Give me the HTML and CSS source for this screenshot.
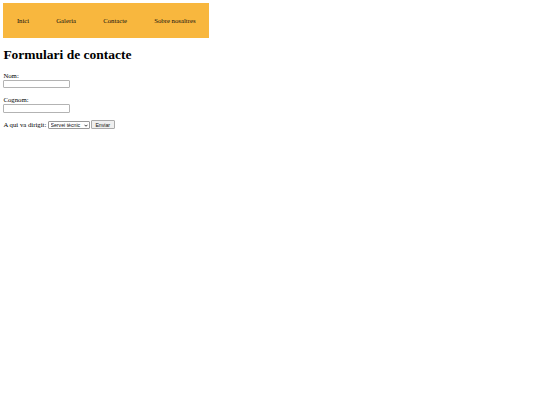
FILE: index.html
```html
<!DOCTYPE html>
<html lang="ca">
<head>
<meta charset="utf-8">
<title>Formulari de contacte</title>
<link rel="stylesheet" href="styles.css">
</head>
<body>
<nav class="menu">
  <a href="#">Inici</a>
  <a href="#">Galeria</a>
  <a href="#">Contacte</a>
  <a href="#">Sobre nosaltres</a>
</nav>
<h1 class="title">Formulari de contacte</h1>
<form class="form">
  <label class="field-label" for="nom">Nom:</label>
  <input class="text-input" id="nom" type="text">
  <label class="field-label second" for="cognom">Cognom:</label>
  <input class="text-input" id="cognom" type="text">
  <div class="send-row">
    <span class="row-label">A qui va dirigit:</span>
    <span class="select-wrap">
      <select class="select">
        <option>Servei tècnic</option>
      </select>
      <svg class="select-arrow" viewBox="0 0 8 5" width="4" height="3" aria-hidden="true"><path d="M1 1 L4 4 L7 1" fill="none" stroke="#111" stroke-width="1.6"/></svg>
    </span>
    <button class="button" type="button">Enviar</button>
  </div>
</form>
</body>
</html>
```
FILE: styles.css
```css
html, body {
  background: #ffffff;
}
body {
  margin: 3.375px;
  font-family: "Liberation Serif", "Times New Roman", serif;
  font-size: 6.75px;
  color: #000;
}
.menu {
  display: flex;
  align-items: center;
  width: 206px;
  height: 34.4px;
  background: #f8b73e;
}
.menu a {
  padding: 0 13.5px;
  font-size: 6.75px;
  white-space: nowrap;
  color: #111;
  text-decoration: none;
}
.title {
  font-size: 13.5px;
  margin: 9px 0;
  line-height: normal;
}
.form {
  display: flex;
  flex-direction: column;
  align-items: flex-start;
}
.field-label {
  display: block;
  height: 7.76px;
}
.field-label.second {
  margin-top: 7.76px;
}
.text-input {
  width: 67px;
  height: 8.86px;
  box-sizing: border-box;
  border: 1px solid #b3b3b3;
  border-radius: 1px;
  padding: 0;
  margin: 0;
  font-size: 5.6px;
  background: #fff;
}
.send-row {
  display: flex;
  align-items: center;
  margin-top: 7.76px;
  height: 8.86px;
}
.row-label {
  white-space: nowrap;
  margin-right: 1.7px;
}
.select-wrap {
  position: relative;
  display: inline-flex;
}
.select {
  appearance: none;
  -webkit-appearance: none;
  width: 42px;
  height: 8.1px;
  box-sizing: border-box;
  font-family: "Liberation Sans", Arial, sans-serif;
  font-size: 5.2px;
  line-height: 6px;
  padding: 0 0 0 1.5px;
  border: 1px solid #9a9a9a;
  border-radius: 1px;
  background: #fff;
  color: #111;
  margin: 0;
}
.select-arrow {
  position: absolute;
  right: 2px;
  top: 2.7px;
}
.button {
  height: 8.86px;
  width: 23.5px;
  box-sizing: border-box;
  padding: 0;
  font-family: "Liberation Sans", Arial, sans-serif;
  font-size: 5.2px;
  line-height: 6px;
  border: 1px solid #aaaaaa;
  border-radius: 1px;
  background: #efefef;
  color: #111;
  margin: 0 0 0 1px;
}
```
